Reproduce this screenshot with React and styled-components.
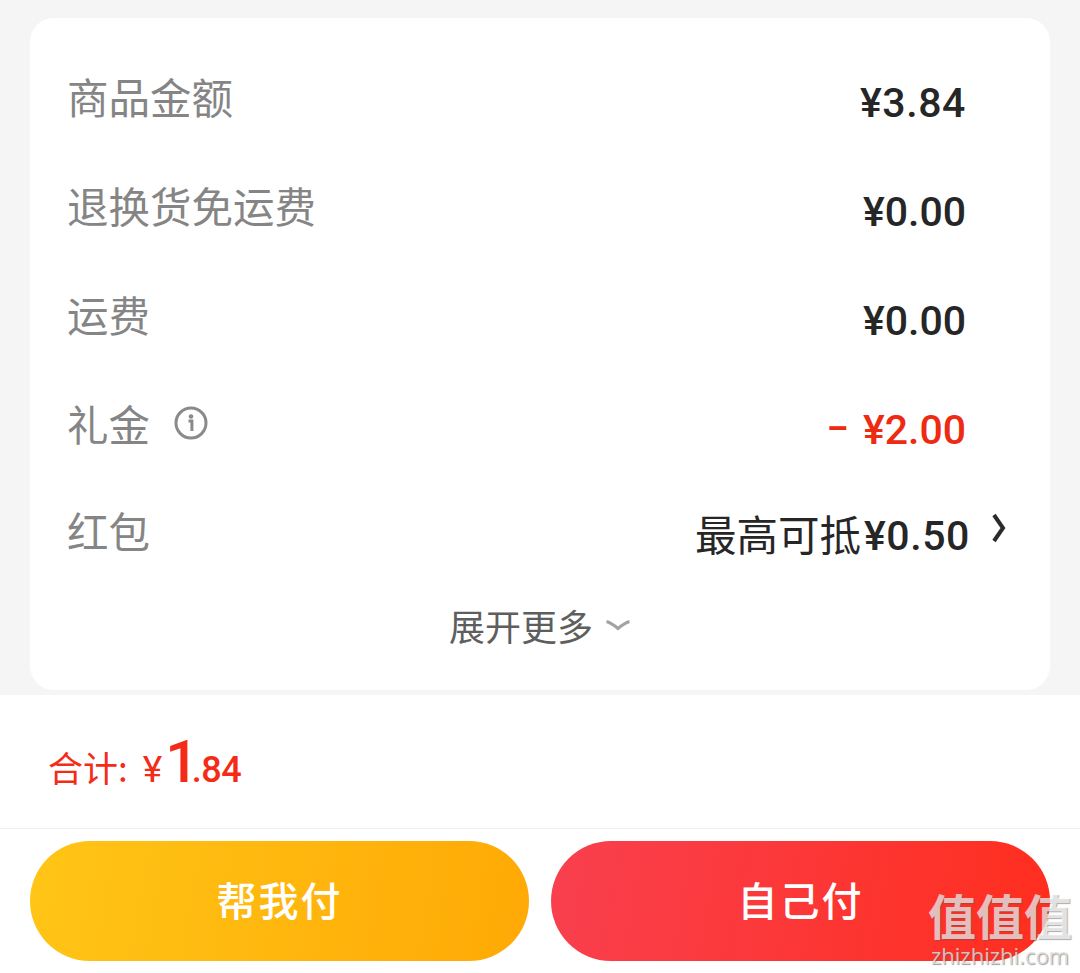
import React from "react";
import styled, { createGlobalStyle } from "styled-components";

const cjk = `"Noto Sans CJK SC", "Noto Sans", sans-serif`;
const digits = `Roboto, "Noto Sans CJK SC", sans-serif`;

const rows = [
  { label: "商品金额", value: "¥3.84", spacing: 0.6 },
  { label: "退换货免运费", value: "¥0.00", spacing: 0 },
  { label: "运费", value: "¥0.00", spacing: 0 },
  { label: "礼金", value: "¥2.00", spacing: 0, discount: true, info: true },
];

const App = () => {
  return (
    <Page>
      <GlobalStyle />
      <Card>
        {rows.map((row) => (
          <Row key={row.label}>
            <Label>
              {row.label}
              {row.info && (
                <InfoIcon viewBox="0 0 34 34">
                  <circle cx="17" cy="17" r="15" fill="none" stroke="#8a8a8a" strokeWidth="3" />
                  <circle cx="17" cy="10.5" r="2.3" fill="#8a8a8a" />
                  <path d="M14.5 15h3.4v10" fill="none" stroke="#8a8a8a" strokeWidth="3" />
                </InfoIcon>
              )}
            </Label>
            <Amount $discount={row.discount} $spacing={row.spacing}>
              {row.discount && <Minus>-</Minus>}
              {row.value}
            </Amount>
          </Row>
        ))}
        <RedPacketRow>
          <Label>红包</Label>
          <RedPacketValue>
            <MaxText>最高可抵</MaxText>
            <MaxAmount>¥0.50</MaxAmount>
            <Chevron viewBox="0 0 16 32">
              <path d="M3 3l9 13-9 13" fill="none" stroke="#2b2b2b" strokeWidth="4" />
            </Chevron>
          </RedPacketValue>
        </RedPacketRow>
        <ExpandRow>
          展开更多
          <ExpandIcon viewBox="0 0 26 12">
            <path d="M1.500 2.500c5 1.500 8 4 11.500 7 3.500-3 6.500-5.500 11.500-7" fill="none" stroke="#a3a3a3" strokeWidth="3.200" />
          </ExpandIcon>
        </ExpandRow>
      </Card>
      <Footer>
        <Total>
          <TotalLabel>合计:</TotalLabel>
          <TotalYen>¥</TotalYen>
          <TotalInt>1</TotalInt>
          <TotalDecimal>.84</TotalDecimal>
        </Total>
        <Actions>
          <PayButton $from="#ffc517" $to="#ffa905">帮我付</PayButton>
          <PayButton $from="#f9404f" $to="#ff2e1e">自己付</PayButton>
        </Actions>
      </Footer>
      <Watermark>
        <WatermarkLogo>值值值</WatermarkLogo>
        <WatermarkUrl>zhizhizhi.com</WatermarkUrl>
      </Watermark>
    </Page>
  );
};

export default App;

const GlobalStyle = createGlobalStyle`
  html, body {
    margin: 0;
    padding: 0;
    background: #f5f5f5;
  }
  * {
    box-sizing: border-box;
  }
`;

const Page = styled.div`
  position: relative;
  width: 1080px;
  height: 973px;
  overflow: hidden;
  padding-top: 18px;
  font-family: ${cjk};
`;

const Card = styled.div`
  width: 1020px;
  height: 672px;
  margin: 0 30px 5px;
  padding: 26px 84px 0 37px;
  background: #fff;
  border-radius: 24px;
`;

const Row = styled.div`
  display: flex;
  justify-content: space-between;
  align-items: center;
  height: 109px;
`;

const Label = styled.div`
  display: flex;
  align-items: center;
  height: 109px;
  margin-top: -6px;
  font-size: 41.500px;
  font-weight: 400;
  color: #858585;
`;

const InfoIcon = styled.svg`
  width: 34px;
  height: 34px;
  margin-left: 24px;
`;

const Amount = styled.div`
  padding-top: 8px;
  font-family: ${digits};
  font-size: 41px;
  font-weight: 500;
  letter-spacing: ${({ $spacing }) => $spacing}px;
  color: ${({ $discount }) => ($discount ? "#ee2a12" : "#262626")};
`;

const Minus = styled.span`
  display: inline-block;
  margin-right: 18px;
  transform: translateY(-3px) scaleX(1.6);
`;

const RedPacketRow = styled(Row)`
  height: 106px;
  margin-right: -41px;
`;

const RedPacketValue = styled.div`
  display: flex;
  align-items: center;
  color: #262626;
`;

const MaxText = styled.span`
  font-size: 41.500px;
  font-weight: 400;
`;

const MaxAmount = styled.span`
  padding-top: 6px;
  margin-left: 3px;
  font-family: ${digits};
  font-size: 41px;
  font-weight: 500;
  letter-spacing: 0.6px;
`;

const Chevron = styled.svg`
  width: 16px;
  height: 32px;
  margin: -10px 0 0 21px;
`;

const ExpandRow = styled.div`
  display: flex;
  align-items: center;
  justify-content: center;
  margin: 0 -84px 0 -37px;
  padding-top: 4px;
  height: 74px;
  font-size: 36px;
  font-weight: 400;
  color: #5e5e5e;
`;

const ExpandIcon = styled.svg`
  width: 26px;
  height: 12px;
  margin-left: 12px;
`;

const Footer = styled.div`
  background: #fff;
  height: 278px;
`;

const Total = styled.div`
  display: flex;
  align-items: baseline;
  height: 134px;
  padding: 32px 0 0 48px;
  border-bottom: 1px solid #eeeeee;
  color: #f42b17;
`;

const TotalLabel = styled.span`
  font-size: 35px;
  font-weight: 400;
`;

const TotalYen = styled.span`
  margin-left: 15px;
  font-family: ${digits};
  font-size: 37px;
  font-weight: 400;
`;

const TotalInt = styled.span`
  margin-left: 3px;
  font-family: ${digits};
  font-size: 59px;
  font-weight: 500;
`;

const TotalDecimal = styled.span`
  margin-left: -7px;
  font-family: ${digits};
  font-size: 36px;
  font-weight: 500;
  letter-spacing: -0.5px;
`;

const Actions = styled.div`
  display: flex;
  gap: 22px;
  padding: 12px 30px 0;
`;

const PayButton = styled.div`
  flex: 1;
  display: flex;
  align-items: center;
  justify-content: center;
  height: 120px;
  padding-bottom: 4px;
  border-radius: 60px;
  background: linear-gradient(100deg, ${({ $from }) => $from}, ${({ $to }) => $to});
  color: #fff;
  font-size: 40px;
  font-weight: 500;
  letter-spacing: 2px;
`;

const Watermark = styled.div`
  position: absolute;
  right: 8px;
  bottom: 7px;
  display: flex;
  flex-direction: column;
  align-items: center;
  color: rgba(255, 255, 255, 0.68);
`;

const WatermarkLogo = styled.div`
  margin-bottom: 6px;
  font-size: 48px;
  line-height: 48px;
  font-weight: 700;
  text-shadow: 1px 1px 1px rgba(90, 90, 90, 0.5);
`;

const WatermarkUrl = styled.div`
  font-family: "Open Sans", sans-serif;
  font-size: 22px;
  line-height: 22px;
  color: rgba(225, 225, 225, 0.8);
  text-shadow: 1px 1px 1px rgba(90, 90, 90, 0.6);
`;
